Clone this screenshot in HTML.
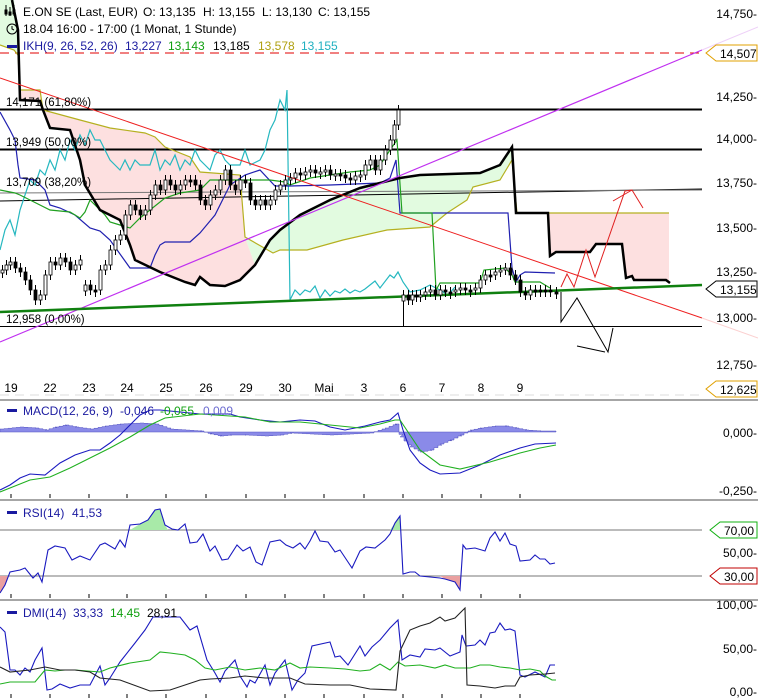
<!DOCTYPE html>
<html><head><meta charset="utf-8"><style>
html,body{margin:0;padding:0;background:#fff;}
svg{display:block;font-family:"Liberation Sans",sans-serif;}
</style></head><body>
<svg id="s" width="758" height="700" viewBox="0 0 758 700" xmlns="http://www.w3.org/2000/svg">
<rect width="758" height="700" fill="#fff"/>
<polygon fill="#fde0e0" points="18,55 20,90 40,90 43,110 80,120 110,128 145,133 155,137 165,147 190,157 200,172 240,175 245,237 255,265 240,280 225,286 210,285 200,277 195,285 185,282 160,272 135,260 130,245 120,220 100,210 85,185 80,160 70,130 50,128 43,110 40,101 20,100"/>
<polygon fill="#e2fbe0" points="0,45 14,50 18,55 18,30 14,0 0,0"/>
<polygon fill="#e2fbe0" points="245,237 273,253 280,250 307,250 343,240 387,230 430,227 447,213 467,200 473,187 500,180 512,160 512,147 500,165 480,173 450,174 420,175 400,178 380,183 360,188 345,194 330,200 300,215 280,230 270,240 255,265"/>
<polygon fill="#fde0e0" points="549,213 669,213 669,283 666,280 634,280 632,276 626,278 622,244 596,244 590,252 556,252 550,256"/>
<line x1="0" y1="53" x2="702" y2="53" stroke="#e00000" stroke-dasharray="9,6" stroke-width="1"/>
<line x1="0" y1="109.5" x2="702" y2="109.5" stroke="#000" stroke-width="2"/>
<line x1="0" y1="149.5" x2="702" y2="149.5" stroke="#000" stroke-width="2"/>
<line x1="0" y1="201" x2="702" y2="189" stroke="#000" stroke-width="1"/>
<line x1="0" y1="193" x2="702" y2="190" stroke="#777" stroke-width="1"/>
<line x1="0" y1="326.5" x2="702" y2="326.5" stroke="#000" stroke-width="1"/>
<line x1="0" y1="395" x2="702" y2="395" stroke="#ddd" stroke-dasharray="9,6"/>
<polyline fill="none" stroke="#b5b020" stroke-width="1.2" points="0,45 14,50 18,55 20,90 40,90 43,110 80,120 110,128 145,133 155,137 165,147 190,157 200,172 240,175 245,237 273,253 280,250 307,250 343,240 387,230 430,227 447,213 467,200 473,187 500,180 512,160 517,213 549,213 669,213"/>
<polyline fill="none" stroke="#26b8c0" stroke-width="1.2" points="0,250 5,230 10,220 15,235 20,210 25,195 30,180 35,185 40,170 45,175 50,160 55,170 60,150 65,160 70,140 75,150 80,135 85,145 90,130 95,140 100,140 105,150 110,160 115,165 120,170 125,160 130,170 135,160 140,165 150,165 155,150 160,170 165,160 170,165 175,155 180,170 185,160 190,165 195,150 200,160 205,165 210,170 215,155 220,150 225,160 230,165 240,165 245,150 250,165 260,160 265,150 270,130 275,120 280,100 285,110 287,90 290,300 295,290 300,295 305,290 310,292 315,286 320,298 325,290 330,296 335,291 340,293 345,289 350,293 355,290 360,292 365,289 375,281 380,288 390,275 394,278 398,272 403,282 410,292 420,290 430,285 440,290 448,295 455,287"/>
<polyline fill="none" stroke="#2020b0" stroke-width="1.2" points="0,112 10,130 15,140 18,165 20,178 35,180 45,190 50,205 60,208 75,215 90,228 100,231 110,240 130,268 150,268 155,255 160,245 165,242 190,242 200,233 215,215 225,195 230,185 245,175 260,170 275,186 290,186 330,185 380,183 390,178 396,160 400,213 508,213 512,268 516,282 520,275 525,272 555,273"/>
<polyline fill="none" stroke="#20a020" stroke-width="1.2" points="0,190 15,193 20,195 30,200 50,210 70,212 80,218 85,212 90,200 95,205 100,210 105,215 110,222 120,225 130,228 140,218 150,210 165,198 180,193 200,190 210,180 230,180 245,180 270,180 285,182 290,185 310,178 330,175 350,172 370,170 380,165 390,150 397,140 402,213 432,213 436,290 440,283 480,283 484,270 505,268 512,275 515,282 540,282 550,288"/>
<polyline fill="none" stroke="#000" stroke-width="2.5" points="12,0 18,30 20,100 40,101 43,110 50,128 70,130 80,160 85,185 100,210 120,220 130,245 135,260 160,272 185,282 195,285 200,277 210,285 225,286 240,280 255,265 270,240 280,230 300,215 330,200 345,194 360,188 380,183 400,178 420,175 450,174 480,173 500,165 512,147 516,213 548,213 550,256 556,252 590,252 596,244 622,244 626,278 632,276 634,280 666,280 670,283"/>
<line x1="0" y1="342" x2="702" y2="50" stroke="#c030f0" stroke-width="1.2"/>
<line x1="702" y1="50" x2="758" y2="27" stroke="#eed0f8" stroke-width="1"/>
<line x1="0" y1="78" x2="702" y2="318" stroke="#ee2020" stroke-width="1"/>
<line x1="702" y1="318" x2="758" y2="338" stroke="#fbd0d0" stroke-width="1"/>
<line x1="0" y1="312" x2="702" y2="285" stroke="#108010" stroke-width="2.5"/>
<polyline fill="none" stroke="#e02020" stroke-width="1" points="561,287 567,274 574,287 586,250 595,277 625,191 632,190"/>
<polyline fill="none" stroke="#e02020" stroke-width="1" points="613,201 632,190 643,208"/>
<polyline fill="none" stroke="#000" stroke-width="1" points="561,292 561,322 577,298 608,352 613,328"/>
<line x1="577" y1="346" x2="605" y2="352" stroke="#000"/>
<g id="candles"></g>
<g font-size="12" fill="#000">
<text y="16"><tspan x="23">E.ON SE (Last, EUR)</tspan><tspan x="143">O: 13,135</tspan><tspan x="203">H: 13,155</tspan><tspan x="262">L: 13,130</tspan><tspan x="318">C: 13,155</tspan></text>
<text x="23" y="33">18.04 16:00 - 17:00 (1 Monat, 1 Stunde)</text>
<text y="50"><tspan x="23" fill="#1a1aa0">IKH(9, 26, 52, 26)</tspan><tspan x="125" fill="#1a1aa0">13,227</tspan><tspan x="168" fill="#10a010">13,143</tspan><tspan x="213" fill="#000">13,185</tspan><tspan x="258" fill="#b0a010">13,578</tspan><tspan x="301" fill="#20b0c0">13,155</tspan></text>
</g>
<g stroke="#000" stroke-width="1" fill="none"><line x1="6" y1="5" x2="6" y2="16"/><line x1="10" y1="7" x2="10" y2="16"/><line x1="14" y1="5" x2="14" y2="16"/><rect x="5" y="10" width="2" height="4" fill="#000"/><rect x="9" y="12" width="2" height="3" fill="#000"/><rect x="13" y="10" width="2" height="4" fill="#000"/>
<circle cx="12" cy="29" r="5"/><polyline points="12,26 12,29 14,30"/></g>
<rect x="7" y="45" width="10" height="3" fill="#1a1aa0"/>
<g font-size="11.5" fill="#000">
<text x="6" y="106">14,171 (61,80%)</text>
<text x="6" y="146">13,949 (50,00%)</text>
<text x="6" y="186">13,709 (38,20%)</text>
<text x="6" y="323">12,958 (0,00%)</text>
</g>
<g font-size="12" fill="#000" text-anchor="end">
<text x="757" y="18">14,750-</text>
<text x="757" y="101">14,250-</text>
<text x="757" y="143">14,000-</text>
<text x="757" y="187">13,750-</text>
<text x="757" y="232">13,500-</text>
<text x="757" y="276">13,250-</text>
<text x="757" y="322">13,000-</text>
<text x="757" y="369">12,750-</text>
<text x="757" y="437">0,000-</text>
<text x="757" y="495">-0,250-</text>
<text x="757" y="557">50,00-</text>
<text x="757" y="609">100,00-</text>
<text x="757" y="653">50,00-</text>
<text x="757" y="696">0,00-</text>
</g>
<g font-size="12" stroke-width="1">
<path d="M716,45 H757 V61 H716 L706,53 Z" fill="#fff" stroke="#e0a000"/><text x="720" y="58">14,507</text>
<path d="M716,281 H757 V297 H716 L706,289 Z" fill="#fff" stroke="#000"/><text x="720" y="294">13,155</text>
<path d="M716,381 H757 V397 H716 L706,389 Z" fill="#fff" stroke="#e0a000"/><text x="720" y="394">12,625</text>
<path d="M720,522 H757 V538 H720 L710,530 Z" fill="#fff" stroke="#10b010"/><text x="724" y="535">70,00</text>
<path d="M720,568 H757 V584 H720 L710,576 Z" fill="#fff" stroke="#c00000"/><text x="724" y="581">30,00</text>
</g>
<g font-size="12" fill="#000" text-anchor="middle">
<text x="11" y="392">19</text><text x="50" y="392">22</text><text x="89" y="392">23</text><text x="127" y="392">24</text><text x="166" y="392">25</text><text x="206" y="392">26</text><text x="246" y="392">29</text><text x="285" y="392">30</text><text x="324" y="392">Mai</text><text x="364" y="392">3</text><text x="403" y="392">6</text><text x="442" y="392">7</text><text x="481" y="392">8</text><text x="520" y="392">9</text>
</g>
<g stroke="#888" stroke-width="1.5"><line x1="0" y1="400" x2="758" y2="400"/><line x1="0" y1="500" x2="758" y2="500"/><line x1="0" y1="600" x2="758" y2="600"/></g>
<g stroke="#777"><line x1="0" y1="530" x2="702" y2="530"/><line x1="0" y1="576" x2="702" y2="576"/></g>
<g id="ticks" stroke="#000"></g>
<path id="hist" fill="#8a8ae8" stroke="#5050c0" stroke-width="0.5"/>
<polyline fill="none" stroke="#1a1ac0" stroke-width="1.1" points="0,490 10,485 20,478 30,474 45,475 60,463 75,455 90,450 100,450 110,443 120,435 130,425 140,415 150,410 160,410 200,414 230,414 240,417 260,420 280,422 300,420 315,421 330,427 345,430 365,426 380,422 390,420 398,413 403,430 410,450 420,463 430,470 440,474 460,473 480,465 500,455 520,448 535,444 556,443"/>
<polyline fill="none" stroke="#20b020" stroke-width="1.1" points="0,492 30,480 50,477 70,468 90,458 110,448 130,437 150,425 165,418 200,414 245,417 270,422 300,422 330,425 360,428 380,424 395,420 400,420 410,435 420,450 440,465 460,469 490,462 520,453 540,448 556,445"/>
<polygon fill="#a8eaa8" points="130,530 140,524 148,520 155,510 160,509 165,525 168,530"/>
<polygon fill="#a8eaa8" points="390,530 395,523 400,516 401,530"/>
<polygon fill="#eaa0a0" points="0,576 0,593 5,585 8,576"/>
<polygon fill="#eaa0a0" points="440,576 445,579 455,582 460,590 461,576"/>
<polyline fill="none" stroke="#1a1ac0" stroke-width="1.1" points="0,593 5,585 10,572 20,570 25,568 33,578 38,573 42,582 48,550 55,546 65,548 72,560 80,556 90,560 100,545 105,543 115,549 120,540 125,547 130,525 140,524 148,520 155,510 160,509 165,525 172,529 178,530 185,524 190,543 197,542 203,534 210,551 215,546 222,560 228,559 237,545 243,551 250,547 256,562 262,565 270,542 280,540 286,545 293,548 300,543 305,549 310,541 315,531 320,541 328,542 335,552 340,550 346,559 352,568 360,551 366,547 375,548 385,540 390,534 395,523 400,516 403,574 410,572 415,572 420,576 430,577 440,578 445,579 455,582 460,590 463,545 466,549 475,548 485,551 490,538 495,532 500,541 505,533 510,544 516,546 520,561 530,560 535,555 540,559 545,559 550,564 555,563"/>
<polyline fill="none" stroke="#1a1ac0" stroke-width="1.1" points="0,627 5,632 10,670 15,670 20,675 25,668 30,672 35,660 42,648 47,690 52,689 60,684 70,688 80,685 90,685 100,666 105,685 110,678 120,662 135,643 145,630 153,617 160,617 180,617 190,630 197,626 207,660 215,673 220,682 225,671 235,660 240,676 247,687 250,680 255,683 265,665 270,685 275,673 285,660 292,690 298,680 305,673 312,646 330,642 335,657 340,656 348,665 360,646 365,656 372,647 380,640 390,628 398,620 402,660 410,655 420,657 425,649 435,650 440,648 450,656 460,652 462,635 466,646 475,645 480,640 485,645 490,633 495,632 500,623 505,630 510,629 515,631 520,675 525,677 535,672 545,677 550,665 555,665"/>
<polyline fill="none" stroke="#20b020" stroke-width="1.1" points="0,684 10,682 35,682 45,670 55,671 65,670 75,670 100,672 110,668 130,663 150,660 160,652 170,653 185,655 195,660 205,668 215,670 230,667 245,670 260,668 275,670 290,663 300,668 310,667 330,668 345,669 360,671 370,670 380,664 390,670 398,662 405,666 420,665 435,668 445,665 455,668 470,668 480,665 490,665 500,667 510,668 520,670 530,669 540,671 545,676 552,680 556,680"/>
<polyline fill="none" stroke="#222" stroke-width="1.1" points="0,667 10,672 30,670 45,667 60,670 75,670 90,672 100,678 120,680 150,691 170,690 200,680 210,679 230,678 245,676 265,678 290,678 305,684 330,685 350,685 370,689 396,690 400,651 410,630 420,626 430,623 440,617 445,621 455,618 465,608 467,685 480,686 495,688 505,686 515,686 520,677 530,675 545,674 555,673"/>
<g font-size="12">
<rect x="7" y="409" width="10" height="3" fill="#1a1aa0"/>
<text y="415"><tspan x="23" fill="#1a1aa0">MACD(12, 26, 9)</tspan><tspan x="120" fill="#1a1aa0">-0,046</tspan><tspan x="160" fill="#10a010">-0,055</tspan><tspan x="203" fill="#6a6ad0">0,009</tspan></text>
<rect x="7" y="511" width="10" height="3" fill="#1a1aa0"/>
<text y="517" fill="#1a1aa0"><tspan x="23">RSI(14)</tspan><tspan x="72">41,53</tspan></text>
<rect x="7" y="611" width="10" height="3" fill="#1a1aa0"/>
<text y="617"><tspan x="23" fill="#1a1aa0">DMI(14)</tspan><tspan x="73" fill="#1a1aa0">33,33</tspan><tspan x="110" fill="#10a010">14,45</tspan><tspan x="147" fill="#000">28,91</tspan></text>
</g>
</svg>
<script>
(function(){
var NS="http://www.w3.org/2000/svg";
var pts=[[2,270],[6,265],[10,262],[15,268],[20,272],[25,280],[30,290],[35,300],[40,295],[45,275],[50,262],[55,265],[60,258],[65,262],[70,270],[75,265],[80,260],[85,285],[90,290],[95,290],[100,270],[105,265],[110,250],[115,240],[120,235],[125,215],[130,205],[135,210],[140,215],[145,210],[150,195],[155,185],[160,190],[165,180],[170,185],[175,190],[180,185],[185,180],[190,180],[195,185],[200,200],[205,205],[210,195],[215,190],[220,180],[225,170],[230,185],[235,190],[240,180],[245,183],[250,200],[255,205],[260,200],[265,205],[270,200],[275,190],[280,185],[285,180],[290,178],[295,173],[300,175],[305,172],[310,170],[315,173],[320,172],[325,170],[330,175],[335,174],[340,175],[345,178],[350,180],[355,176],[360,175],[365,165],[370,160],[375,170],[380,160],[385,150],[390,140],[394,125],[398,110],[403,295],[408,300],[412,295],[416,297],[420,295],[425,292],[430,290],[435,295],[440,290],[445,292],[450,292],[455,290],[460,288],[465,290],[470,290],[475,288],[480,280],[485,275],[490,275],[495,272],[500,270],[505,268],[510,275],[515,280],[520,292],[525,295],[530,290],[535,290],[540,290],[545,290],[550,292],[556,292]];
var g=document.getElementById('candles');
for(var i=0;i<pts.length;i++){var x=pts[i][0],c=pts[i][1],o=i>0?pts[i-1][1]:c+3;if(Math.abs(o-c)>20)o=c+6;var top=Math.min(o,c),h=Math.max(Math.abs(o-c),2);
var l=document.createElementNS(NS,'line');l.setAttribute('x1',x+0.5);l.setAttribute('x2',x+0.5);l.setAttribute('y1',top-5);l.setAttribute('y2',x==403?326:top+h+5);l.setAttribute('stroke','#000');g.appendChild(l);
var r=document.createElementNS(NS,'rect');r.setAttribute('x',x-1);r.setAttribute('y',top);r.setAttribute('width',3);r.setAttribute('height',h);r.setAttribute('fill',c<o?'#fff':'#000');r.setAttribute('stroke','#000');r.setAttribute('stroke-width','0.8');g.appendChild(r);}
var t=document.getElementById('ticks');[11,50,89,127,166,206,246,285,324,364,403,442,481,520].forEach(function(x){[494,594,694].forEach(function(y){var l=document.createElementNS(NS,'line');l.setAttribute('x1',x);l.setAttribute('x2',x);l.setAttribute('y1',y);l.setAttribute('y2',y+4);t.appendChild(l);});});
var hv=[[0,3],[20,5],[35,4],[45,2],[55,5],[65,7],[75,5],[90,3],[105,6],[120,8],[140,9],[155,8],[170,3],[200,1],[210,-2],[220,-4],[230,-3],[245,-3],[265,-4],[280,-3],[290,-1],[310,-2],[330,-3],[350,-2],[370,-1],[385,4],[395,8],[400,-5],[410,-15],[420,-20],[430,-18],[440,-12],[450,-8],[460,-3],[470,2],[480,4],[495,6],[505,6],[515,4],[525,2],[540,1],[556,1]];
var d="M0,432";for(var k=0;k<hv.length-1;k++){var x0=hv[k][0],x1=hv[k+1][0],v0=hv[k][1],v1=hv[k+1][1];for(var x=x0;x<x1;x+=4){var v=v0+(v1-v0)*(x-x0)/(x1-x0);d+=" L"+x+","+(432-v)+" L"+(x+4)+","+(432-v);}}d+=" L556,432 Z";document.getElementById('hist').setAttribute('d',d);
})();
</script>
</body></html>
